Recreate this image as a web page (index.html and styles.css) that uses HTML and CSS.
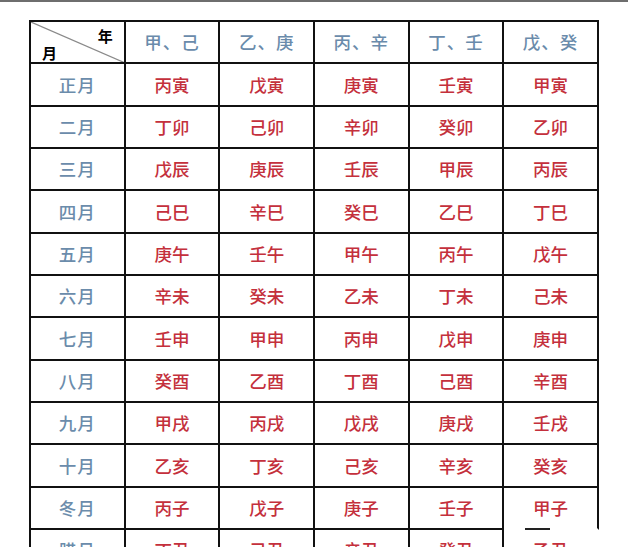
FILE: index.html
```html
<!DOCTYPE html>
<html lang="zh">
<head>
<meta charset="utf-8">
<link rel="stylesheet" href="styles.css">
</head>
<body>
<div class="topbar"></div>
<div class="wrap">
  <div class="grid">
    <div class="cell corner">
      <svg class="diag" viewBox="0 0 100 100" preserveAspectRatio="none"><line x1="0" y1="0" x2="100" y2="100" stroke="#8a8a8a" stroke-width="1.2" vector-effect="non-scaling-stroke"/></svg>
      <span class="c-year">年</span>
      <span class="c-month">月</span>
    </div>
    <div class="cell head">甲、己</div>
    <div class="cell head">乙、庚</div>
    <div class="cell head">丙、辛</div>
    <div class="cell head">丁、壬</div>
    <div class="cell head">戊、癸</div>

    <div class="cell mon">正月</div><div class="cell val">丙寅</div><div class="cell val">戊寅</div><div class="cell val">庚寅</div><div class="cell val">壬寅</div><div class="cell val">甲寅</div>
    <div class="cell mon">二月</div><div class="cell val">丁卯</div><div class="cell val">己卯</div><div class="cell val">辛卯</div><div class="cell val">癸卯</div><div class="cell val">乙卯</div>
    <div class="cell mon">三月</div><div class="cell val">戊辰</div><div class="cell val">庚辰</div><div class="cell val">壬辰</div><div class="cell val">甲辰</div><div class="cell val">丙辰</div>
    <div class="cell mon">四月</div><div class="cell val">己巳</div><div class="cell val">辛巳</div><div class="cell val">癸巳</div><div class="cell val">乙巳</div><div class="cell val">丁巳</div>
    <div class="cell mon">五月</div><div class="cell val">庚午</div><div class="cell val">壬午</div><div class="cell val">甲午</div><div class="cell val">丙午</div><div class="cell val">戊午</div>
    <div class="cell mon">六月</div><div class="cell val">辛未</div><div class="cell val">癸未</div><div class="cell val">乙未</div><div class="cell val">丁未</div><div class="cell val">己未</div>
    <div class="cell mon">七月</div><div class="cell val">壬申</div><div class="cell val">甲申</div><div class="cell val">丙申</div><div class="cell val">戊申</div><div class="cell val">庚申</div>
    <div class="cell mon">八月</div><div class="cell val">癸酉</div><div class="cell val">乙酉</div><div class="cell val">丁酉</div><div class="cell val">己酉</div><div class="cell val">辛酉</div>
    <div class="cell mon">九月</div><div class="cell val">甲戌</div><div class="cell val">丙戌</div><div class="cell val">戊戌</div><div class="cell val">庚戌</div><div class="cell val">壬戌</div>
    <div class="cell mon">十月</div><div class="cell val">乙亥</div><div class="cell val">丁亥</div><div class="cell val">己亥</div><div class="cell val">辛亥</div><div class="cell val">癸亥</div>
    <div class="cell mon">冬月</div><div class="cell val">丙子</div><div class="cell val">戊子</div><div class="cell val">庚子</div><div class="cell val">壬子</div><div class="cell val open">甲子<span class="dash"></span></div>
    <div class="cell mon">腊月</div><div class="cell val">丁丑</div><div class="cell val">己丑</div><div class="cell val">辛丑</div><div class="cell val">癸丑</div><div class="cell val last">乙丑</div>
  </div>
</div>
</body>
</html>
```

FILE: styles.css
```css
html, body {
  margin: 0;
  padding: 0;
  background: #ffffff;
}
body {
  font-family: "Noto Sans CJK SC", "Noto Sans", sans-serif;
  overflow: hidden;
}
.topbar {
  height: 2px;
  background: #6e6e6e;
}
.wrap {
  padding: 18px 0 0 29px;
}
.grid {
  display: grid;
  grid-template-columns: repeat(6, 94.67px);
  grid-auto-rows: 42.33px;
  width: 570px;
  border-top: 2px solid #111;
  border-left: 2px solid #111;
  box-sizing: border-box;
}
.cell {
  box-sizing: border-box;
  border-right: 2px solid #111;
  border-bottom: 2px solid #111;
  display: flex;
  align-items: center;
  justify-content: center;
  font-size: 17.5px;
  line-height: 1;
  position: relative;
}
.head {
  color: #6a8bab;
  font-weight: 500;
  letter-spacing: 1px;
}
.mon {
  color: #6b8cab;
  font-weight: 500;
  letter-spacing: 1px;
}
.val {
  color: #c4303c;
  font-weight: 500;
}
.corner {
  display: block;
}
.diag {
  position: absolute;
  left: 0;
  top: 0;
  width: 100%;
  height: 100%;
}
.c-year {
  position: absolute;
  right: 11px;
  top: 6px;
  color: #000;
  font-size: 15px;
  font-weight: 700;
}
.c-month {
  position: absolute;
  left: 11px;
  top: 23px;
  color: #000;
  font-size: 15px;
  font-weight: 700;
}
.open {
  border-bottom-color: transparent;
}
.dash {
  position: absolute;
  left: 21px;
  bottom: -2px;
  width: 25px;
  height: 2px;
  background: #222;
}
.last {
  border-right-color: transparent;
}
```
